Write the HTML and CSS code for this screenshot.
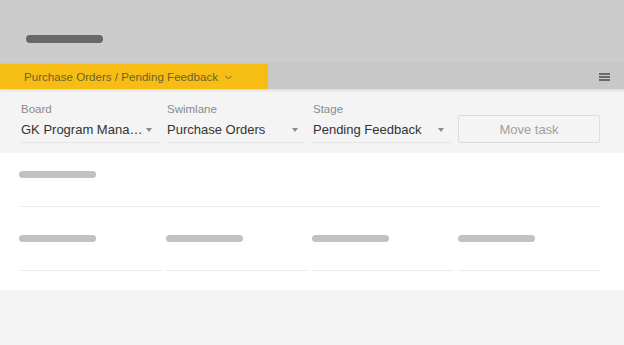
FILE: index.html
```html
<!DOCTYPE html>
<html>
<head>
<meta charset="utf-8">
<link rel="stylesheet" href="styles.css">
</head>
<body>
<header class="header"><span class="logo-pill"></span></header>
<nav class="subnav">
  <div class="crumb">
    <span>Purchase Orders / Pending Feedback</span>
    <svg class="chev" width="7" height="5" viewBox="0 0 7 5"><path d="M0.5 1 L3.5 4 L6.5 1" fill="none" stroke="#6e6030" stroke-width="1"/></svg>
  </div>
  <div class="menu"><span></span><span></span><span></span></div>
</nav>
<section class="form">
  <div class="field">
    <div class="label">Board</div>
    <div class="select"><span class="val">GK Program Management</span><span class="arrow"></span></div>
  </div>
  <div class="field">
    <div class="label">Swimlane</div>
    <div class="select"><span class="val">Purchase Orders</span><span class="arrow"></span></div>
  </div>
  <div class="field">
    <div class="label">Stage</div>
    <div class="select"><span class="val">Pending Feedback</span><span class="arrow"></span></div>
  </div>
  <div class="field">
    <button class="btn">Move task</button>
  </div>
</section>
<section class="content">
  <div class="row1"><span class="sk first"></span></div>
  <div class="row2">
    <div class="cell"><span class="sk first"></span></div>
    <div class="cell"><span class="sk"></span></div>
    <div class="cell"><span class="sk"></span></div>
    <div class="cell"><span class="sk"></span></div>
  </div>
</section>
</body>
</html>
```
FILE: styles.css
```css
* { box-sizing: border-box; }
html, body { margin: 0; padding: 0; }
body {
  background: #f4f4f4;
  font-family: "Liberation Sans", Arial, sans-serif;
  width: 624px;
  height: 345px;
  overflow: hidden;
}
.header {
  height: 64px;
  background: #cccccc;
  padding: 35px 0 0 26px;
}
.logo-pill {
  display: block;
  width: 77px;
  height: 8px;
  border-radius: 4px;
  background: #686868;
}
.subnav {
  position: relative;
  z-index: 1;
  height: 25px;
  background: #c8c8c8;
  display: flex;
  align-items: center;
  justify-content: space-between;
  box-shadow: 0 1px 3px rgba(0,0,0,0.15);
}
.crumb {
  height: 25px;
  width: 268px;
  background: #f6be14;
  padding-left: 24px;
  display: flex;
  align-items: center;
  font-size: 11.6px;
  color: #6e6030;
}
.chev { margin-left: 7px; margin-top: 1px; }
.menu {
  width: 11px;
  margin-right: 14px;
  display: flex;
  flex-direction: column;
  gap: 1px;
}
.menu span {
  display: block;
  height: 2px;
  background: #6a6a6a;
}
.form {
  height: 64px;
  padding: 12px 24px 10px 20px;
  display: grid;
  grid-template-columns: 140px 140px 140px 142px;
  column-gap: 6px;
  align-items: end;
}
.label {
  font-size: 11.5px;
  line-height: 14px;
  color: #8a8a8a;
  padding-left: 1px;
}
.select {
  height: 27px;
  border-bottom: 1px solid #e6e6e6;
  display: flex;
  align-items: center;
  padding-left: 1px;
  font-size: 13px;
  color: #333;
}
.val {
  flex: 1;
  min-width: 0;
  white-space: nowrap;
  overflow: hidden;
  text-overflow: ellipsis;
  padding-right: 3px;
}
.arrow {
  width: 0; height: 0;
  border-left: 3px solid transparent;
  border-right: 3px solid transparent;
  border-top: 4px solid #8a8a8a;
  margin-right: 8px;
  margin-top: 2px;
}
.btn {
  display: block;
  width: 142px;
  height: 28px;
  background: #f4f4f4;
  border: 1px solid #dcdcdc;
  border-radius: 2px;
  font-family: inherit;
  font-size: 13px;
  color: #a0a0a0;
  padding: 0;
}
.content {
  background: #ffffff;
  padding: 18px 23px 19px 20px;
}
.sk {
  display: block;
  width: 77px;
  height: 7px;
  border-radius: 4px;
  background: #c2c2c2;
}
.sk.first { margin-left: -1px; }
.row1 {
  height: 36px;
  border-bottom: 1px solid #ececec;
}
.row2 {
  display: grid;
  grid-template-columns: 142px 142px 142px 143px;
  column-gap: 4px;
  padding-top: 28px;
}
.cell {
  height: 36px;
  border-bottom: 1px solid #ececec;
}
```
